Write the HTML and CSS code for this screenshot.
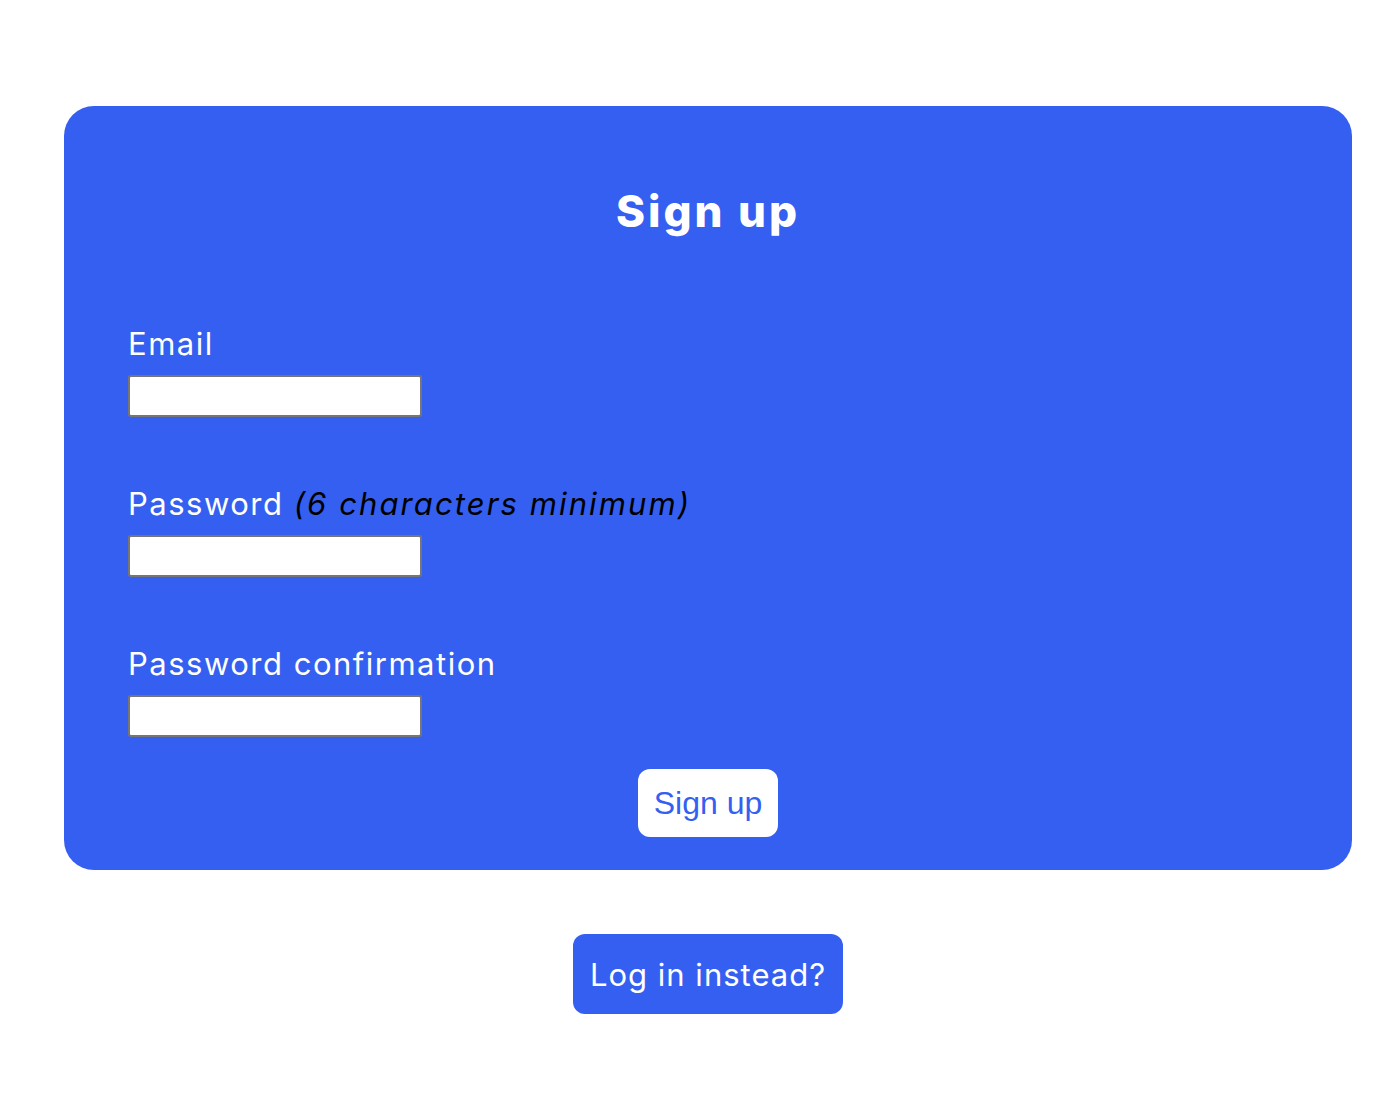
FILE: index.html
```html
<!DOCTYPE html>
<html lang="en">
<head>
<meta charset="utf-8">
<title>Sign up</title>
<link rel="stylesheet" href="styles.css">
</head>
<body>
<main class="page">
  <section class="card">
    <h1 class="title">Sign up</h1>
    <form class="form">
      <div class="field">
        <label class="label" for="email">Email</label>
        <input class="input" id="email" type="email">
      </div>
      <div class="field">
        <label class="label" for="password">Password <em class="hint">(6 characters minimum)</em></label>
        <input class="input" id="password" type="password">
      </div>
      <div class="field">
        <label class="label" for="confirm">Password confirmation</label>
        <input class="input" id="confirm" type="password">
      </div>
      <div class="actions">
        <button class="submit" type="submit">Sign up</button>
      </div>
    </form>
  </section>
  <div class="below">
    <a class="login" href="#">Log in instead?</a>
  </div>
</main>
</body>
</html>
```
FILE: styles.css
```css
html, body {
  margin: 0;
  padding: 0;
  background: #ffffff;
}
body {
  font-family: "Inter", "Noto Sans", sans-serif;
}
.page {
  padding: 106px 28px 0 64px;
  display: flex;
  flex-direction: column;
}
.card {
  background: #355ff0;
  border-radius: 30px;
  padding: 75px 64px 33px 64px;
  color: #ffffff;
}
.title {
  margin: 0;
  text-align: center;
  font-size: 44px;
  line-height: 60px;
  font-weight: 800;
  letter-spacing: 3px;
}
.form {
  margin-top: 83px;
  display: flex;
  flex-direction: column;
}
.field {
  display: flex;
  flex-direction: column;
  align-items: flex-start;
}
.field + .field {
  margin-top: 67px;
}
.label {
  font-size: 31px;
  line-height: 40px;
  font-weight: 400;
  letter-spacing: 1.5px;
  color: #ffffff;
}
.hint {
  color: #000000;
  font-style: italic;
  letter-spacing: 2.1px;
}
.input {
  margin-top: 11px;
  box-sizing: border-box;
  width: 294px;
  height: 42px;
  border: 2px solid #767676;
  border-radius: 3px;
  background: #ffffff;
  padding: 0 4px;
}
.actions {
  margin-top: 32px;
  display: flex;
  justify-content: center;
}
.submit {
  background: #ffffff;
  color: #355ff0;
  border: none;
  border-radius: 12px;
  height: 68px;
  padding: 0 16px;
  font-family: "Liberation Sans", Arial, sans-serif;
  font-size: 32px;
}
.below {
  margin-top: 64px;
  display: flex;
  justify-content: center;
}
.login {
  display: flex;
  align-items: center;
  height: 80px;
  padding: 0 17px;
  background: #355ff0;
  color: #ffffff;
  border-radius: 12px;
  text-decoration: none;
  font-size: 31px;
  letter-spacing: 1px;
}
```
